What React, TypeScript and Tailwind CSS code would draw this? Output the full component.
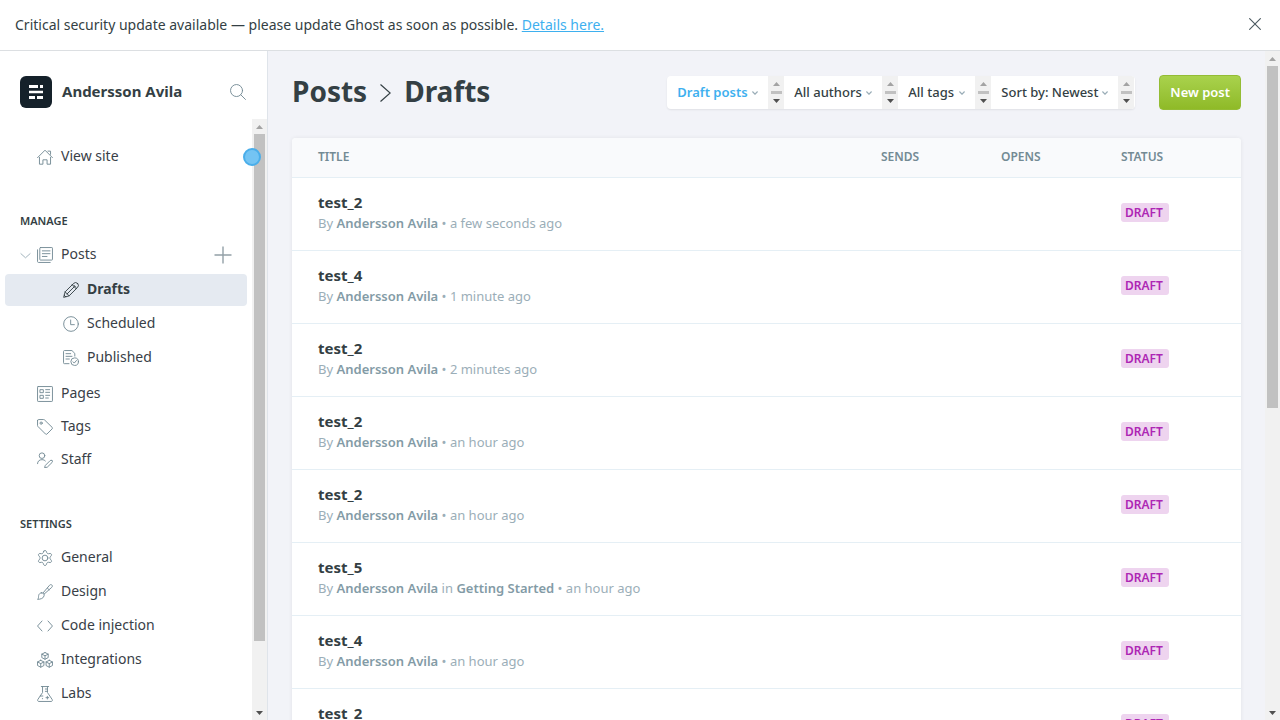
import type { ReactNode } from "react";

function Icon({ children, className = "size-4 text-[#738a94]" }: { children: ReactNode; className?: string }) {
  return (
    <svg
      viewBox="0 0 24 24"
      fill="none"
      stroke="currentColor"
      strokeWidth="1.4"
      strokeLinecap="round"
      strokeLinejoin="round"
      aria-hidden="true"
      className={"shrink-0 " + className}
    >
      {children}
    </svg>
  );
}

const icons = {
  home: (
    <>
      <path d="M.8 13 12 1.8 23.2 13" />
      <path d="M3.7 12.5v10.3h5.2v-6.6h6.2v6.6h5.2V12.5" />
      <path d="M16.5 3.2h3.8V8" />
    </>
  ),
  posts: (
    <>
      <rect x="4.2" y=".8" width="19" height="18.8" rx="1" />
      <path d="M.8 4.2v17.6c0 .8.6 1.4 1.4 1.4h17.6M8 5.8h11.5M8 10h11.5M8 14.2h7" />
    </>
  ),
  pencil: (
    <>
      <path d="M21.9 2.1a4.2 4.2 0 0 0-6 0L3.2 14.8 1 23l8.2-2.2L21.9 8.1a4.2 4.2 0 0 0 0-6Z" />
      <path d="m13.8 4.2 6 6M3.2 14.8l6 6M17 7 6 18M1.8 19.8l2.4 2.4M16 4.5l3.5 3.5" />
    </>
  ),
  clock: (
    <>
      <circle cx="12" cy="12" r="11" />
      <path d="M11.5 6v7H17" />
    </>
  ),
  published: (
    <>
      <path d="M9 20.5H2.2A1.4 1.4 0 0 1 .8 19V2.2C.8 1.4 1.4.8 2.2.8h11.2l4.300 4.300v4" />
      <path d="M4.500 5.500h7M4.500 9.500h9M4.500 13.500h5" />
      <circle cx="17.500" cy="17.500" r="5.700" />
      <path d="m15 17.700 1.900 1.900 3.300-3.900" />
    </>
  ),
  pages: (
    <>
      <rect x=".8" y=".8" width="22.400" height="22.400" rx="1" />
      <path d="M5 5.500h4.500V10H5zM5 14h4.500v4.500H5zM13 5.500h6M13 9.500h6M13 14h6M13 18h4" />
    </>
  ),
  tag: (
    <>
      <path d="M.8 2.200v7.600c0 .5.200 1 .5 1.300l11.500 11.500c.6.6 1.500.6 2.100 0l7.900-7.900c.6-.6.6-1.500 0-2.100L11.200 1.300A2 2 0 0 0 9.800.8H2.200C1.400.8.8 1.400.8 2.200Z" />
      <circle cx="6.200" cy="6.200" r="1.700" />
    </>
  ),
  staff: (
    <>
      <circle cx="7.500" cy="5.500" r="4.200" />
      <path d="M.8 17.500c0-3.800 2.800-6 6.700-6 2.200 0 3.900.7 5 1.900" />
      <path d="M22.600 12.900a2 2 0 0 0-2.900 0l-7.200 7.200-1.200 3.200 4-.4 7.300-7.200a2 2 0 0 0 0-2.800Z" />
    </>
  ),
  gear: (
    <>
      <circle cx="12" cy="12" r="4.300" />
      <path d="m10.100 1.800-.8 2.300c-.4 1.100-1.500 1.700-2.600 1.500l-2.400-.4c-1.500-.2-2.700 1.900-1.800 3.100L4 10.200c.8 1 .8 2.500 0 3.500l-1.500 2c-.9 1.200.3 3.300 1.800 3.100l2.400-.4c1.100-.2 2.200.4 2.600 1.500l.8 2.300c.5 1.400 3.300 1.400 3.800 0l.8-2.300c.4-1.100 1.500-1.700 2.600-1.500l2.400.4c1.500.2 2.700-1.900 1.800-3.100l-1.500-2c-.8-1-.8-2.500 0-3.500l1.500-1.900c.9-1.200-.3-3.300-1.800-3.100l-2.400.4c-1.100.2-2.200-.4-2.600-1.500l-.8-2.300c-.5-1.400-3.300-1.400-3.800 0Z" />
    </>
  ),
  brush: (
    <>
      <path d="M9 13.500 18.800 1.900c1-1.200 2.500-1.300 3.500-.4 1 1 1 2.500-.2 3.600L10.600 15.200" />
      <path d="m15.500 6 2.700 2.700M6.500 13.200c2.400-.6 4.800 1.700 4.200 4.300-.9 4.300-5.800 5.500-9.900 5.500 2-1.500 1.200-3.300 1.700-5.800.4-2.200 2-3.600 4-4Z" />
    </>
  ),
  code: <path d="M7.500 4.500.8 12l6.700 7.500M16.500 4.500l6.700 7.500-6.700 7.500" />,
  cubes: (
    <>
      <path d="m12 .8 4.800 2.400v5.200L12 10.900 7.200 8.400V3.200L12 .8ZM7.200 3.200 12 5.700l4.800-2.500M12 5.700v5.200" />
      <path d="m5.600 12.500 4.800 2.400v5.400l-4.800 2.500-4.800-2.500v-5.400l4.800-2.400ZM.8 14.900l4.800 2.500 4.800-2.500M5.600 17.400v5.400" />
      <path d="m18.400 12.500 4.800 2.400v5.400l-4.800 2.500-4.800-2.500v-5.400l4.800-2.400ZM13.600 14.900l4.800 2.500 4.800-2.500M18.400 17.400v5.400" />
    </>
  ),
  flask: (
    <>
      <path d="M6.500.8h11M8.300.8v9L1.200 20.300c-.9 1.300 0 2.900 1.500 2.900h18.600c1.500 0 2.400-1.600 1.500-2.900L15.700 9.800v-9" />
      <path d="M12.500 4.500h3.200M12.500 8h3.200M4.800 15h4M15.500 15.500v4M13.500 17.500h4M8 19h.5" />
    </>
  ),
};

function NavItem({ icon, label, sub = false, active = false }: { icon: ReactNode; label: string; sub?: boolean; active?: boolean }) {
  const indent = sub ? "pl-[58px]" : "pl-8";
  const look = active ? "bg-[#e5eaf1] font-bold text-[#343f44]" : "text-[#394047]";
  return (
    <li>
      <a
        href="#"
        aria-current={active ? "page" : undefined}
        className={"mx-[5px] flex h-8 items-center gap-2 rounded " + indent + " " + look}
      >
        <Icon className={active ? "size-4 text-[#343f44]" : "size-4 text-[#738a94]"}>{icon}</Icon>
        <span className="-mt-0.5">{label}</span>
      </a>
    </li>
  );
}

function Arrow({ down = false }: { down?: boolean }) {
  return (
    <svg viewBox="0 0 7 4" className={"h-1 w-[7px] " + (down ? "text-[#505050]" : "text-[#a3a3a3]")} fill="currentColor" aria-hidden="true">
      {down ? <path d="M0 0h7L3.500 4z" /> : <path d="M0 4h7L3.500 0z" />}
    </svg>
  );
}

function Scrollbar({ thumb, rest }: { thumb: string; rest: string }) {
  return (
    <div aria-hidden="true" className="flex w-[15px] shrink-0 flex-col bg-[#f1f1f1]">
      <div className="flex h-[15px] items-center justify-center">
        <Arrow />
      </div>
      <div className="flex flex-1 flex-col px-0.5">
        <div className={"bg-[#c1c1c1] " + thumb} />
        <div className={rest} />
      </div>
      <div className="flex h-[15px] items-center justify-center">
        <Arrow down />
      </div>
    </div>
  );
}

function Filter({ name, value, width, accent = false }: { name: string; value: string; width: string; accent?: boolean }) {
  return (
    <div className="flex h-[33px]">
      <div className={"flex items-center " + width}>
        <select
          aria-label={name}
          defaultValue={value}
          className={
            "h-full w-full appearance-none bg-transparent pl-2.5 text-[13px] outline-none " +
            (accent ? "font-semibold text-[#3eb0ef]" : "font-medium text-[#343f44]")
          }
        >
          <option>{value}</option>
        </select>
        <svg viewBox="0 0 6 4" className="pointer-events-none -ml-4 h-1 w-1.5 shrink-0" fill="none" stroke="#9baeb8" strokeWidth="1.2" aria-hidden="true">
          <path d="m.4.5 2.600 2.700L5.600.5" />
        </svg>
      </div>
      <div aria-hidden="true" className="flex w-4 flex-col items-center justify-between bg-[#f1f1f1] py-1.5">
        <Arrow />
        <div className="h-[3px] w-[11px] bg-[#c1c1c1]" />
        <Arrow down />
      </div>
    </div>
  );
}

type Post = { title: string; tag?: string; when: string };

const posts: Post[] = [
  { title: "test_2", when: "a few seconds ago" },
  { title: "test_4", when: "1 minute ago" },
  { title: "test_2", when: "2 minutes ago" },
  { title: "test_2", when: "an hour ago" },
  { title: "test_2", when: "an hour ago" },
  { title: "test_5", tag: "Getting Started", when: "an hour ago" },
  { title: "test_4", when: "an hour ago" },
  { title: "test_2", when: "an hour ago" },
];

function PostRow({ post }: { post: Post }) {
  return (
    <tr className="h-[73px] border-b border-[#e5eff5]">
      <td className="pb-0.5 pl-[26px]">
        <a href="#" className="block">
          <h3 className="text-[15px] leading-5 font-bold text-[#343f44]">{post.title}</h3>
          <p className="text-[13px] leading-[22px] text-[#9baeb8]">
            By <span className="font-semibold text-[#839ba6]">Andersson Avila</span>
            {post.tag && (
              <>
                {" "}
                in <span className="font-semibold text-[#839ba6]">{post.tag}</span>
              </>
            )}{" "}
            • {post.when}
          </p>
        </a>
      </td>
      <td />
      <td />
      <td className="pb-0.5">
        <span className="flex h-[19px] w-12 items-center rounded-[3px] bg-[#eed4ef] px-1 text-xs font-semibold text-[#ad26b4]">DRAFT</span>
      </td>
    </tr>
  );
}

function Sidebar() {
  return (
    <nav className="relative flex w-[268px] shrink-0 flex-col border-r border-[#dfe4ea] bg-white text-sm">
      <div className="flex h-[68px] shrink-0 items-center px-5 pt-3.5">
        <svg viewBox="0 0 32 32" className="size-8" aria-hidden="true">
          <rect width="32" height="32" rx="6" fill="#15212a" />
          <path
            fill="#fff"
            d="M9 9h9v3H9zM20 9h3v3h-3zM9 14.700h14v2.600H9zM9 20h6v3H9zM17 20h6v3h-6z"
          />
        </svg>
        <strong className="ml-2.5 flex-1 text-[15px] font-bold text-[#343f44]">Andersson Avila</strong>
        <button type="button" aria-label="Search" className="mr-px">
          <Icon>
            <circle cx="9.800" cy="9.800" r="9" />
            <path d="m16.200 16.200 7 7" />
          </Icon>
        </button>
      </div>
      <div className="flex min-h-0 flex-1">
        <div className="flex-1 overflow-hidden pt-[22px]">
          <ul>
            <NavItem icon={icons.home} label="View site" />
          </ul>
          <h2 className="mt-10 mb-2.5 px-5 text-[11px] leading-4 font-semibold text-[#343f44]">MANAGE</h2>
          <div className="mb-[3px] flex items-center">
            <button type="button" aria-label="Collapse posts" className="ml-5 w-3">
              <Icon className="size-[11px] text-[#9baeb8]">
                <path d="m2 8 10 9L22 8" strokeWidth="2" />
              </Icon>
            </button>
            <ul className="-ml-8 flex-1">
              <NavItem icon={icons.posts} label="Posts" />
            </ul>
            <button type="button" aria-label="New post" className="mr-5">
              <svg viewBox="0 0 18 18" className="size-[18px]" stroke="#93a0a7" strokeWidth="1.400" aria-hidden="true">
                <path d="M9 .5v17M.5 9h17" />
              </svg>
            </button>
          </div>
          <ul className="mb-1 flex flex-col gap-0.5">
            <NavItem sub active icon={icons.pencil} label="Drafts" />
            <NavItem sub icon={icons.clock} label="Scheduled" />
            <NavItem sub icon={icons.published} label="Published" />
          </ul>
          <ul className="flex flex-col gap-px">
            <NavItem icon={icons.pages} label="Pages" />
            <NavItem icon={icons.tag} label="Tags" />
            <NavItem icon={icons.staff} label="Staff" />
          </ul>
          <h2 className="mt-10 mb-2.5 px-5 text-[11px] leading-4 font-semibold text-[#343f44]">SETTINGS</h2>
          <ul className="flex flex-col gap-0.5">
            <NavItem icon={icons.gear} label="General" />
            <NavItem icon={icons.brush} label="Design" />
            <NavItem icon={icons.code} label="Code injection" />
            <NavItem icon={icons.cubes} label="Integrations" />
            <NavItem icon={icons.flask} label="Labs" />
          </ul>
        </div>
        <Scrollbar thumb="flex-[507]" rest="flex-[64]" />
      </div>
      <span className="pointer-events-none absolute top-[97px] right-1.5 size-[18px] rounded-full border-2 border-[#4aaeea] bg-[#74c4f3]" />
    </nav>
  );
}

export default function App() {
  return (
    <div className="flex h-screen flex-col overflow-hidden bg-[#f2f3f8] font-['Noto_Sans',sans-serif] text-[#343f44]">
      <aside className="flex h-[51px] shrink-0 items-center justify-between border-b border-[#dcdfe2] bg-white px-[15px] text-sm">
        <p>
          Critical security update available — please update Ghost as soon as possible.{" "}
          <a href="#" className="text-[#3eb0ef] underline">
            Details here.
          </a>
        </p>
        <button type="button" aria-label="Close" className="mr-1 pb-0.5">
          <svg viewBox="0 0 12 12" className="size-3" stroke="#4b5960" strokeWidth="1.100" aria-hidden="true">
            <path d="m.3.3 11.400 11.400M11.700.3.3 11.700" />
          </svg>
        </button>
      </aside>
      <div className="flex min-h-0 flex-1">
        <Sidebar />
        <main className="min-w-0 flex-1 overflow-hidden px-6 pt-6">
          <header className="mb-7 flex h-[35px] items-center">
            <h1 className="flex flex-1 items-center pb-1 text-[28px] leading-8 font-bold">
              <a href="#">Posts</a>
              <svg viewBox="0 0 11 18" className="mx-[13px] mt-1 h-[18px] w-[11px]" fill="none" stroke="#343f44" strokeWidth="1.200" aria-hidden="true">
                <path d="m.5.5 9.700 8.500-9.700 8.500" />
              </svg>
              Drafts
            </h1>
            <div className="mr-6 flex overflow-hidden rounded bg-white pr-px shadow-[0_1px_2px_rgba(0,0,0,0.08)]">
              <Filter name="Post type" value="Draft posts" width="w-[101px]" accent />
              <Filter name="Author" value="All authors" width="w-[98px]" />
              <Filter name="Tag" value="All tags" width="w-[77px]" />
              <Filter name="Order" value="Sort by: Newest" width="w-[127px]" />
            </div>
            <a
              href="#"
              className="flex h-[35px] items-center rounded border border-[#94bc35] bg-linear-to-b from-[#a9d24c] to-[#8fba27] px-2.5 text-[13px] font-semibold text-white"
            >
              New post
            </a>
          </header>
          <div className="overflow-hidden rounded-t bg-white shadow-[0_0_4px_rgba(0,0,0,0.07)]">
            <table className="w-full table-fixed border-collapse text-left">
              <thead className="bg-[#f9fafc] text-xs text-[#738a94]">
                <tr className="h-[39px] border-b border-[#e5eff5]">
                  <th className="pl-[26px] font-semibold">TITLE</th>
                  <th className="w-[120px] font-semibold">SENDS</th>
                  <th className="w-[120px] font-semibold">OPENS</th>
                  <th className="w-[120px] font-semibold">STATUS</th>
                </tr>
              </thead>
              <tbody>
                {posts.map((post, i) => (
                  <PostRow key={i} post={post} />
                ))}
              </tbody>
            </table>
          </div>
        </main>
        <Scrollbar thumb="flex-[342]" rest="flex-[297]" />
      </div>
    </div>
  );
}
